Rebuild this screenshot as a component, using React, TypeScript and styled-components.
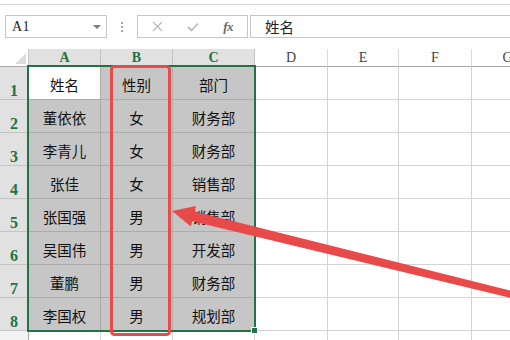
import React from "react";
import styled, { createGlobalStyle } from "styled-components";

const GlobalStyle = createGlobalStyle`
  html, body { margin: 0; padding: 0; background: #ffffff; }
  body { font-family: "Noto Sans CJK SC", "Noto Sans", sans-serif; }
`;

const Page = styled.div`
  position: relative;
  width: 510px;
  height: 340px;
  overflow: hidden;
  background: #ffffff;
`;

const TopRule = styled.div`
  height: 4px;
  border-bottom: 1px solid #d6d6d6;
`;

const Toolbar = styled.div`
  display: flex;
  align-items: stretch;
  height: 23px;
  margin-top: 10px;
  padding-left: 5px;
`;

const NameBox = styled.div`
  box-sizing: border-box;
  width: 102px;
  border: 1px solid #c6c6c6;
  display: flex;
  align-items: center;
  justify-content: space-between;
  padding: 0 5px 0 6px;
  font-family: "Liberation Serif", serif;
  font-size: 14px;
  letter-spacing: 0.5px;
  color: #222;
`;

const Caret = styled.span`
  width: 0;
  height: 0;
  border-left: 4px solid transparent;
  border-right: 4px solid transparent;
  border-top: 4px solid #7a7a7a;
  margin-top: 1px;
`;

const Grip = styled.div`
  width: 30px;
  display: flex;
  flex-direction: column;
  align-items: center;
  justify-content: center;
  gap: 2px;
`;

const GripDot = styled.span`
  width: 2px;
  height: 2px;
  background: #a6a6a6;
`;

const FxGroup = styled.div`
  box-sizing: border-box;
  width: 111px;
  border: 1px solid #c6c6c6;
  display: flex;
  align-items: center;
  justify-content: space-between;
  padding: 0 14px 0 14px;
`;

const FxLabel = styled.span`
  font-family: "Liberation Serif", serif;
  font-style: italic;
  font-weight: 700;
  font-size: 13px;
  color: #6a6a6a;
  letter-spacing: -0.5px;
`;

const FormulaInput = styled.div`
  box-sizing: border-box;
  flex: 1;
  margin-left: 2px;
  border: 1px solid #c6c6c6;
  border-right: none;
  display: flex;
  align-items: center;
  padding-left: 14px;
  font-size: 14.5px;
  color: #222;
`;

const SheetWrap = styled.div`
  position: relative;
  margin-top: 11px;
`;

const Grid = styled.div`
  display: grid;
  grid-template-columns: 29px 72px 72px 82px 73px 71px 73px 72px;
  grid-template-rows: 18px repeat(9, 33px);
`;

const Corner = styled.div`
  box-sizing: border-box;
  position: relative;
  background: #ffffff;
  border-right: 1px solid #c9c9c9;
  border-bottom: 1px solid #a8a8a8;
  &::after {
    content: "";
    position: absolute;
    right: 2px;
    bottom: 2px;
    width: 0;
    height: 0;
    border-left: 11px solid transparent;
    border-bottom: 11px solid #dcdcdc;
  }
`;

const ColHead = styled.div<{ $sel?: boolean }>`
  box-sizing: border-box;
  display: flex;
  align-items: flex-end;
  justify-content: center;
  padding-bottom: 1px;
  background: ${(p) => (p.$sel ? "#e1e1e1" : "#ffffff")};
  border-right: 1px solid ${(p) => (p.$sel ? "#c4c4c4" : "#dadada")};
  border-bottom: 1px solid #a8a8a8;
  font-family: "Liberation Serif", serif;
  font-weight: ${(p) => (p.$sel ? 700 : 400)};
  font-size: 14px;
  line-height: 15px;
  color: ${(p) => (p.$sel ? "#217346" : "#444444")};
`;

const RowHead = styled.div<{ $sel?: boolean }>`
  box-sizing: border-box;
  display: flex;
  align-items: flex-end;
  justify-content: center;
  background: ${(p) => (p.$sel ? "#e1e1e1" : "#f3f3f3")};
  border-right: 1px solid #a8a8a8;
  border-bottom: 1px solid ${(p) => (p.$sel ? "#c4c4c4" : "#dadada")};
  font-family: "Liberation Serif", serif;
  font-weight: 700;
  font-size: 16px;
  line-height: 17px;
  color: ${(p) => (p.$sel ? "#217346" : "#444444")};
`;

const Cell = styled.div<{ $sel?: boolean; $active?: boolean }>`
  box-sizing: border-box;
  display: flex;
  align-items: center;
  justify-content: center;
  padding-top: 2px;
  background: ${(p) => (p.$active ? "#ffffff" : p.$sel ? "#c6c6c6" : "#ffffff")};
  border-right: 1px solid ${(p) => (p.$sel ? "#ababab" : "#d4d4d4")};
  border-bottom: 1px solid ${(p) => (p.$sel ? "#ababab" : "#d4d4d4")};
  font-size: 14.5px;
  color: #111111;
  white-space: nowrap;
`;

const Selection = styled.div`
  position: absolute;
  left: 27px;
  top: 16px;
  width: 229px;
  height: 267px;
  box-sizing: border-box;
  border: 2px solid #217346;
  pointer-events: none;
`;

const FillHandle = styled.div`
  position: absolute;
  left: 251px;
  top: 278px;
  width: 5px;
  height: 5px;
  background: #217346;
  border: 1px solid #ffffff;
`;

const Annotation = styled.svg`
  position: absolute;
  left: 0;
  top: 0;
  width: 510px;
  height: 340px;
  pointer-events: none;
`;

const data: string[][] = [
  ["姓名", "性别", "部门"],
  ["董依依", "女", "财务部"],
  ["李青儿", "女", "财务部"],
  ["张佳", "女", "销售部"],
  ["张国强", "男", "销售部"],
  ["吴国伟", "男", "开发部"],
  ["董鹏", "男", "财务部"],
  ["李国权", "男", "规划部"],
];

const cols = ["A", "B", "C", "D", "E", "F", "G"];

export default function App() {
  const rows: React.ReactNode[] = [];
  for (let r = 0; r < 9; r++) {
    const selRow = r < 8;
    rows.push(
      <RowHead key={`rh${r}`} $sel={selRow}>
        {selRow ? r + 1 : ""}
      </RowHead>
    );
    for (let c = 0; c < 7; c++) {
      const sel = selRow && c < 3;
      const active = r === 0 && c === 0;
      rows.push(
        <Cell key={`c${r}-${c}`} $sel={sel} $active={active}>
          {sel ? data[r][c] : ""}
        </Cell>
      );
    }
  }

  return (
    <Page>
      <GlobalStyle />
      <TopRule />
      <Toolbar>
        <NameBox>
          <span>A1</span>
          <Caret />
        </NameBox>
        <Grip>
          <GripDot />
          <GripDot />
          <GripDot />
        </Grip>
        <FxGroup>
          <svg width="11" height="11" viewBox="0 0 11 11">
            <path d="M1 1 L10 10 M10 1 L1 10" stroke="#bdbdbd" strokeWidth="1.4" fill="none" />
          </svg>
          <svg width="12" height="10" viewBox="0 0 12 10">
            <path d="M1 5 L4.5 8.5 L11 1.5" stroke="#bdbdbd" strokeWidth="1.8" fill="none" />
          </svg>
          <FxLabel>fx</FxLabel>
        </FxGroup>
        <FormulaInput>姓名</FormulaInput>
      </Toolbar>
      <SheetWrap>
        <Grid>
          <Corner />
          {cols.map((c, i) => (
            <ColHead key={c} $sel={i < 3}>
              {c}
            </ColHead>
          ))}
          {rows}
        </Grid>
        <Selection />
        <FillHandle />
      </SheetWrap>
      <Annotation viewBox="0 0 510 340">
        <rect x="111.5" y="66.5" width="58" height="268" rx="3" ry="3" fill="none" stroke="#e84a4a" strokeWidth="3" />
        <polygon
          points="172,211 196,206 194.6,211.5 530.8,295.7 529.2,302.5 192.2,221.2 190.9,226.5"
          fill="#e84a4a"
        />
      </Annotation>
    </Page>
  );
}
